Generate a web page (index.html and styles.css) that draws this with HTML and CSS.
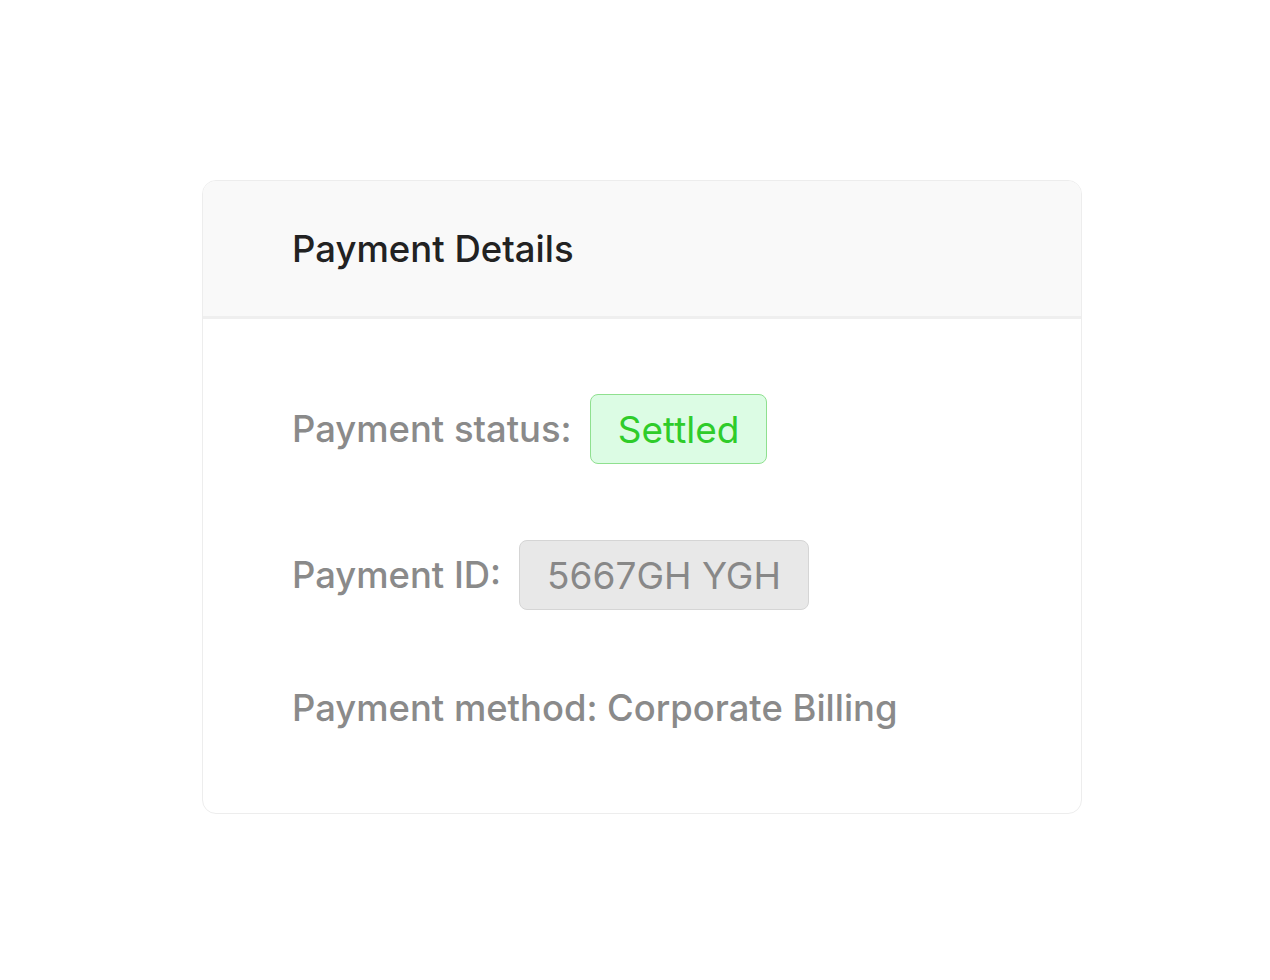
FILE: index.html
```html
<!DOCTYPE html>
<html lang="en">
<head>
  <meta charset="UTF-8">
  <title>Payment Details</title>
  <link rel="stylesheet" href="styles.css">
</head>
<body>
  <main class="page">
    <section class="card">
      <header class="card-header">
        <h1>Payment Details</h1>
      </header>
      <div class="card-body">
        <div class="row">
          <span class="label">Payment status:</span>
          <span class="badge badge-success">Settled</span>
        </div>
        <div class="row">
          <span class="label">Payment ID:</span>
          <span class="badge badge-muted">5667GH YGH</span>
        </div>
        <div class="row">
          <span class="label">Payment method: Corporate Billing</span>
        </div>
      </div>
    </section>
  </main>
</body>
</html>
```

FILE: styles.css
```css
body {
  margin: 0;
  padding: 0;
  background-color: #fff;
  font-family: Inter, "Noto Sans", sans-serif;
}
.page {
  padding: 180px 0 0 202px;
}
.card {
  width: 878px;
  border: 1px solid #ededed;
  border-radius: 14px;
  overflow: hidden;
}
.card-header {
  background-color: #f9f9f9;
  border-bottom: 3px solid #efefef;
  height: 135px;
  padding: 0 89px;
  display: flex;
  align-items: center;
}
.card-header h1 {
  margin: 0;
  font-size: 36.5px;
  font-weight: 450;
  color: #222;
}
.card-body {
  padding: 75px 89px 83px;
  display: flex;
  flex-direction: column;
  gap: 76px;
}
.row {
  display: flex;
  align-items: center;
  gap: 18px;
  min-height: 70px;
}
.row:last-child {
  min-height: 40px;
}
.label {
  font-size: 36.4px;
  color: #8a8a8a;
  font-weight: 500;
}
.badge {
  box-sizing: border-box;
  height: 70px;
  padding: 0 27px;
  border-radius: 8px;
  font-size: 37px;
  display: flex;
  align-items: center;
}
.badge-success {
  background-color: #dcfce4;
  border: 1.5px solid #8fe08f;
  color: #2fcc2a;
}
.badge-muted {
  background-color: #e8e8e8;
  border: 1.5px solid #d5d5d5;
  color: #888;
}
```
